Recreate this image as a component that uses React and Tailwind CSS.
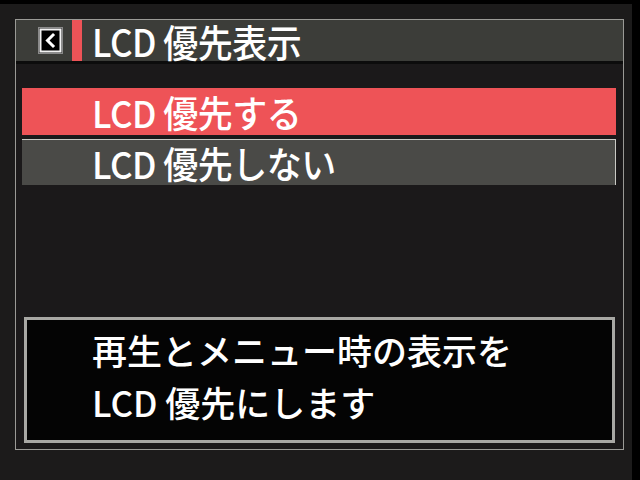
import React from 'react';

const jp = { fontFamily: '"Noto Sans CJK JP", "Noto Sans", sans-serif' };

// small framed "<" button in the title bar
const BackIcon = () => (
    <svg width="25" height="27" viewBox="0 0 25 27" className="shrink-0">
        <rect x="0.5" y="0.5" width="24" height="26" fill="#2a2a2a" stroke="#8a8a8a" />
        <rect x="2.5" y="2.5" width="20" height="22" fill="#000" stroke="#f2f2f2" strokeWidth="2" />
        <path d="M15 8 L9.5 13.5 L15 19" fill="none" stroke="#fff" strokeWidth="3" strokeLinecap="square" />
    </svg>
);

const Option = ({ label, selected }) => (
    <div
        className={`flex items-center pl-[70px] text-white text-[35px] font-medium leading-none ${
            selected
                ? 'h-[47px] bg-[#ee5357]'
                : 'h-[46px] bg-[#4a4a47] border-t border-r border-[#c9c9c4]'
        }`}
    >
        <span className="inline-block scale-y-[1.06] tracking-[-0.5px]">{label}</span>
    </div>
);

export default function App() {
    return (
        <div className="w-[640px] h-[480px] bg-[#1c1b1b] border-t-[4px] border-r-[8px] border-black overflow-hidden" style={jp}>
            <div className="ml-[15px] mt-[15px] w-[609px] h-[431px] border border-[#9a9a96] bg-[#1b191a] flex flex-col">
                {/* title bar */}
                <div className="h-[44px] bg-[#3c3d39] flex items-center border-b-[3px] border-[#0c0c0c]">
                    <div className="ml-[22px]">
                        <BackIcon />
                    </div>
                    <div className="ml-[9px] w-[10px] self-stretch bg-[#ee5357]" />
                    <div className="ml-[10px] text-white text-[35px] font-medium leading-none">
                        <span className="inline-block scale-y-[1.08] tracking-[-0.5px]">LCD 優先表示</span>
                    </div>
                </div>

                {/* choices */}
                <div className="mt-[24px] ml-[6px] w-[594px] flex flex-col gap-[4px]">
                    <Option label="LCD 優先する" selected />
                    <Option label="LCD 優先しない" />
                </div>

                {/* help text */}
                <div className="mt-auto mb-[6px] ml-[8px] w-[591px] h-[126px] border-[3px] border-[#a8a8a4] bg-[#040404] pl-[65px] pt-[4px] text-white text-[35px] font-medium leading-[52px]">
                    <div>再生とメニュー時の表示を</div>
                    <div>LCD 優先にします</div>
                </div>
            </div>
        </div>
    );
}
